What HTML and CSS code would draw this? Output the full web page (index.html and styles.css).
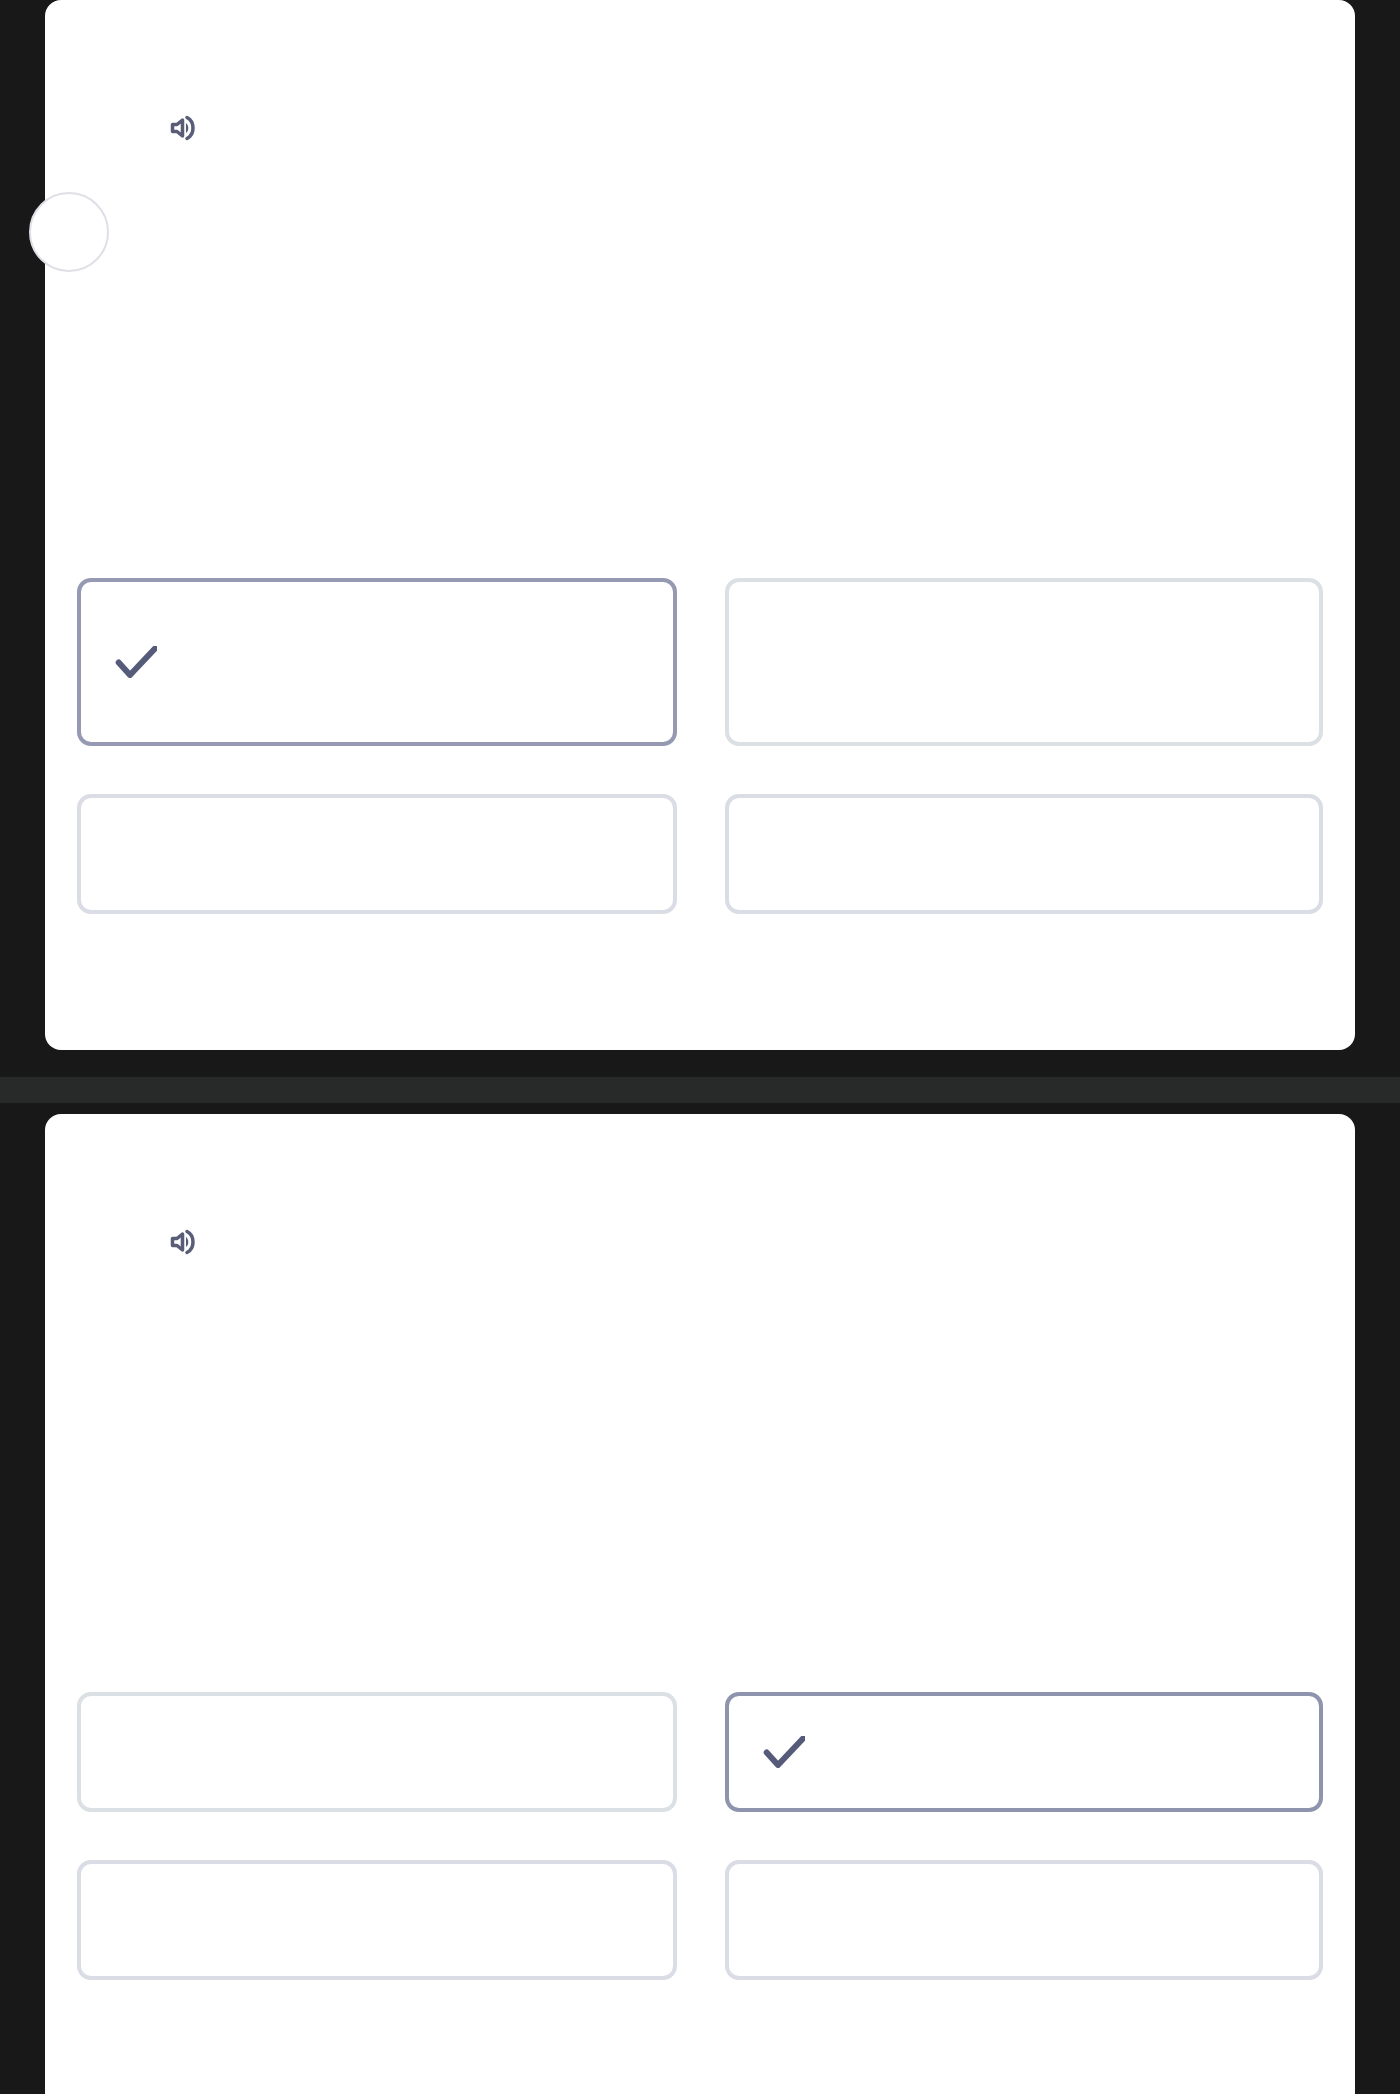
FILE: index.html
```html
<!DOCTYPE html>
<html lang="en">
<head>
<meta charset="utf-8">
<title>Quiz</title>
<link rel="stylesheet" href="styles.css">
</head>
<body>
<main class="page">
  <section class="card">
    <button class="speaker" aria-label="Play audio">
      <svg viewBox="0 0 28 28" width="28" height="28"><path class="speaker-cone" d="M3.5 10.5H8L13.5 6V22L8 17.5H3.5Z"/><path class="speaker-wave" d="M18 3.5C26 7.5 26 20.5 18 24.5"/><path class="speaker-inner" d="M17 9C20 11 20 17 17 19Z"/></svg>
    </button>
    <span class="timer"></span>
    <div class="options">
      <div class="option option-tall option-selected">
        <svg class="check" viewBox="0 0 46 32" width="46" height="32"><path d="M7.7 16.5L19 29L44 2.5"/></svg>
      </div>
      <div class="option option-tall option-cool"></div>
      <div class="option"></div>
      <div class="option"></div>
    </div>
  </section>
  <div class="divider"></div>
  <section class="card">
    <button class="speaker" aria-label="Play audio">
      <svg viewBox="0 0 28 28" width="28" height="28"><path class="speaker-cone" d="M3.5 10.5H8L13.5 6V22L8 17.5H3.5Z"/><path class="speaker-wave" d="M18 3.5C26 7.5 26 20.5 18 24.5"/><path class="speaker-inner" d="M17 9C20 11 20 17 17 19Z"/></svg>
    </button>
    <div class="options">
      <div class="option option-cool"></div>
      <div class="option option-selected option-selected-cool">
        <svg class="check" viewBox="0 0 46 32" width="46" height="32"><path d="M7.7 16.5L19 29L44 2.5"/></svg>
      </div>
      <div class="option"></div>
      <div class="option"></div>
    </div>
  </section>
</main>
</body>
</html>
```
FILE: styles.css
```css
html, body {
  margin: 0;
  height: 100%;
  background: #181818;
  overflow: hidden;
}

.page {
  display: flex;
  flex-direction: column;
  height: 2094px;
  overflow: hidden;
}

.card {
  position: relative;
  flex: none;
  box-sizing: border-box;
  height: 1050px;
  margin: 0 45px;
  padding: 114px 32px 0;
  background: #fff;
  border-radius: 16px;
}

.speaker {
  display: block;
  margin: 0 0 0 92px;
  padding: 0;
  width: 28px;
  height: 28px;
  border: 0;
  background: none;
}

.speaker svg {
  display: block;
}

.speaker-cone {
  fill: none;
  stroke: #5a5d78;
  stroke-width: 3.5;
  stroke-linejoin: round;
}

.speaker-wave {
  fill: none;
  stroke: #5a5d78;
  stroke-width: 3.5;
  stroke-linecap: round;
}

.speaker-inner {
  fill: #5a5d78;
}

.timer {
  position: absolute;
  left: -16px;
  top: 192px;
  box-sizing: border-box;
  width: 80px;
  height: 80px;
  border: 2px solid #dfdfe8;
  border-radius: 50%;
  background: #fff;
}

.options {
  display: grid;
  grid-template-columns: 600px 598px;
  column-gap: 48px;
  row-gap: 48px;
  margin-top: 436px;
}

.option {
  display: flex;
  align-items: center;
  box-sizing: border-box;
  height: 120px;
  padding-left: 30px;
  border: 4px solid #dadce6;
  border-radius: 14px;
}

.option-tall {
  height: 168px;
}

.option-cool {
  border-color: #dae0e4;
}

.option-selected {
  border-color: #9699b2;
}

.option-selected-cool {
  border-color: #8e94ac;
}

.check path {
  fill: none;
  stroke: #565b7a;
  stroke-width: 6;
  stroke-linecap: round;
  stroke-linejoin: round;
}

.divider {
  flex: none;
  height: 26px;
  margin: 27px 0 11px;
  background: #282a29;
}
```
